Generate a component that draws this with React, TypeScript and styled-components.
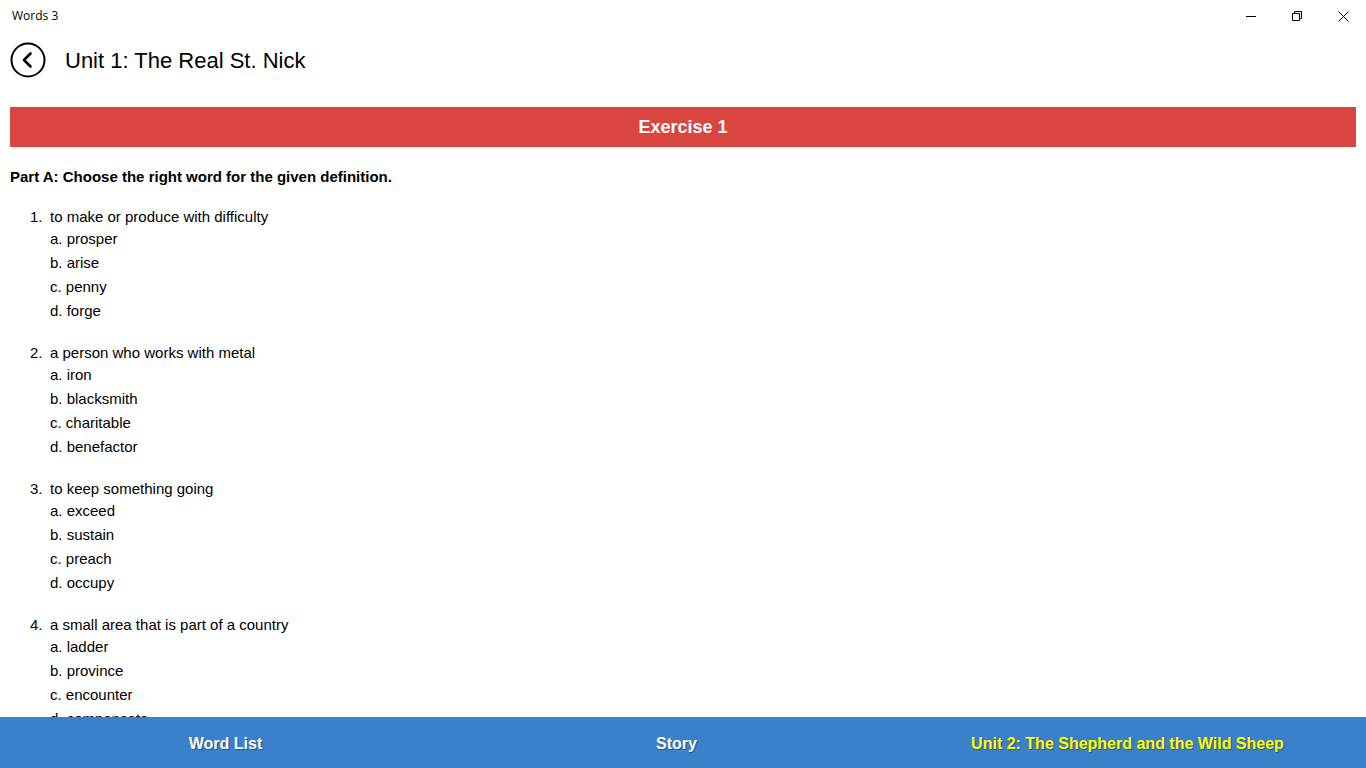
import React from 'react'
import styled, { createGlobalStyle } from 'styled-components'

const GlobalStyle = createGlobalStyle`
  html, body {
    margin: 0;
    padding: 0;
    background: #ffffff;
    font-family: 'Liberation Sans', Arial, sans-serif;
    overflow: hidden;
  }
`

interface IQuestion {
  text: string
  options: string[]
}

const questions: IQuestion[] = [
  { text: 'to make or produce with difficulty', options: ['prosper', 'arise', 'penny', 'forge'] },
  { text: 'a person who works with metal', options: ['iron', 'blacksmith', 'charitable', 'benefactor'] },
  { text: 'to keep something going', options: ['exceed', 'sustain', 'preach', 'occupy'] },
  { text: 'a small area that is part of a country', options: ['ladder', 'province', 'encounter', 'compensate'] },
  { text: 'to give something to make up for a loss', options: ['compensate', 'generous', 'wealth', 'fortune'] },
]

const letters = ['a', 'b', 'c', 'd']

function App() {
  return (
    <StyledApp>
      <GlobalStyle />
      <TitleBar>
        <AppName>Words 3</AppName>
        <WindowControls>
          <WindowButton>
            <svg width="10" height="10" viewBox="0 0 10 10">
              <path d="M0 5.5h10" stroke="#000" strokeWidth="1" />
            </svg>
          </WindowButton>
          <WindowButton>
            <svg width="10" height="10" viewBox="0 0 10 10">
              <path d="M0.5 2.5h7v7h-7z M2.5 2.5v-2h7v7h-2" stroke="#000" strokeWidth="1" fill="none" />
            </svg>
          </WindowButton>
          <WindowButton>
            <svg width="11" height="11" viewBox="0 0 11 11">
              <path d="M0.5 0.5l10 10M10.5 0.5l-10 10" stroke="#000" strokeWidth="1" />
            </svg>
          </WindowButton>
        </WindowControls>
      </TitleBar>
      <Header>
        <BackButton>
          <svg width="36" height="36" viewBox="0 0 36 36">
            <circle cx="18" cy="18" r="16.5" stroke="#000" strokeWidth="2" fill="none" />
            <path d="M20.5 11.5l-6.5 6.5 6.5 6.5" stroke="#000" strokeWidth="2.6" fill="none" strokeLinecap="round" strokeLinejoin="round" />
          </svg>
        </BackButton>
        <PageTitle>Unit 1: The Real St. Nick</PageTitle>
      </Header>
      <Content>
        <ExerciseBar>Exercise 1</ExerciseBar>
        <PartTitle>Part A: Choose the right word for the given definition.</PartTitle>
        <QuestionList>
          {questions.map((q, idx) => (
            <Question key={q.text}>
              <QuestionText>
                <Number>{idx + 1}.</Number>
                {q.text}
              </QuestionText>
              {q.options.map((opt, i) => (
                <Option key={opt}>
                  {letters[i]}. {opt}
                </Option>
              ))}
            </Question>
          ))}
        </QuestionList>
      </Content>
      <BottomBar>
        <BottomItem>Word List</BottomItem>
        <BottomItem>Story</BottomItem>
        <BottomItem highlight>Unit 2: The Shepherd and the Wild Sheep</BottomItem>
      </BottomBar>
    </StyledApp>
  )
}

export default App

const StyledApp = styled.div`
  display: flex;
  flex-direction: column;
  width: 1366px;
  height: 768px;
  overflow: hidden;
  background: #ffffff;
`

const TitleBar = styled.div`
  display: flex;
  align-items: center;
  justify-content: space-between;
  height: 32px;
  flex-shrink: 0;
`

const AppName = styled.div`
  padding-left: 12px;
  font-family: 'Open Sans', 'Noto Sans', sans-serif;
  font-size: 12px;
  color: #000000;
  margin-top: -2px;
`

const WindowControls = styled.div`
  display: flex;
  height: 32px;
`

const WindowButton = styled.div`
  display: flex;
  align-items: center;
  justify-content: center;
  width: 46px;
  height: 32px;
`

const Header = styled.div`
  display: flex;
  align-items: center;
  height: 56px;
  padding-left: 10px;
  flex-shrink: 0;
`

const BackButton = styled.div`
  display: flex;
  width: 36px;
  height: 36px;
`

const PageTitle = styled.h1`
  margin: 2px 0 0 19px;
  font-size: 22px;
  font-weight: 400;
  color: #000000;
`

const Content = styled.div`
  flex: 1;
  overflow: hidden;
  padding: 19px 10px 0;
`

const ExerciseBar = styled.div`
  display: flex;
  align-items: center;
  justify-content: center;
  height: 40px;
  background: #da4540;
  color: #ffffff;
  font-size: 18px;
  font-weight: 700;
`

const PartTitle = styled.div`
  margin-top: 21px;
  font-size: 15px;
  font-weight: 700;
  color: #000000;
`

const QuestionList = styled.div`
  display: flex;
  flex-direction: column;
  gap: 20px;
  padding-top: 22px;
`

const Question = styled.div`
  display: flex;
  flex-direction: column;
  font-size: 15px;
  color: #000000;
`

const QuestionText = styled.div`
  display: flex;
  height: 20px;
  line-height: 20px;
  padding-left: 20px;
`

const Number = styled.span`
  width: 20px;
`

const Option = styled.div`
  height: 24px;
  line-height: 24px;
  padding-left: 40px;
`

const BottomBar = styled.div`
  display: grid;
  grid-template-columns: repeat(3, 451px);
  height: 51px;
  flex-shrink: 0;
  background: #3a80cb;
`

const BottomItem = styled.div<{ highlight?: boolean }>`
  display: flex;
  align-items: center;
  justify-content: center;
  padding-top: 2px;
  font-size: 16px;
  font-weight: 700;
  color: ${({ highlight }) => (highlight ? '#ffff00' : '#ffffff')};
  text-shadow: 1px 1px 1px rgba(0, 0, 0, 0.35);
`
